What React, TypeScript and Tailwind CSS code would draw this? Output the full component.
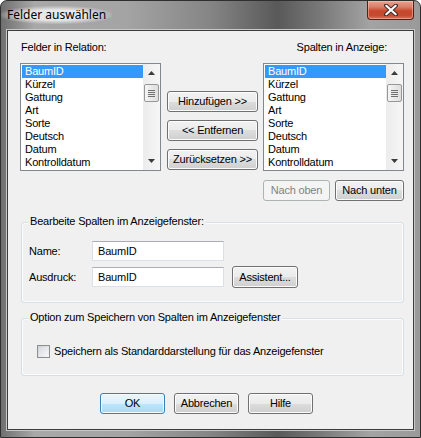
import type { ReactNode } from "react";

const fields = ["BaumID", "Kürzel", "Gattung", "Art", "Sorte", "Deutsch", "Datum", "Kontrolldatum"];

function Arrow({ down = false }: { down?: boolean }) {
  return (
    <svg width="7" height="4" viewBox="0 0 7 4" aria-hidden>
      <path d={down ? "M0 0h7L3.5 4z" : "M3.5 0L7 4H0z"} fill="#3b3b3b" />
    </svg>
  );
}

function Scrollbar() {
  return (
    <div className="flex h-full w-[17px] flex-col bg-gradient-to-r from-[#ececec] to-[#f6f6f6]">
      <div className="flex h-[17px] items-center justify-center pt-px">
        <Arrow />
      </div>
      <div className="mx-px mt-[3px] flex h-[18px] flex-col items-center justify-center gap-px rounded-[2px] border border-[#979797] bg-gradient-to-r from-[#f5f5f5] to-[#dedede]">
        <div className="h-px w-[7px] bg-[#6f6f6f]" />
        <div className="h-px w-[7px] bg-[#6f6f6f]" />
        <div className="h-px w-[7px] bg-[#6f6f6f]" />
        <div className="h-px w-[7px] bg-[#6f6f6f]" />
      </div>
      <div className="flex-1" />
      <div className="flex h-[17px] items-center justify-center pb-px">
        <Arrow down />
      </div>
    </div>
  );
}

function ListBox() {
  return (
    <div className="flex h-[108px] w-[141px] border border-[#828790] bg-white">
      <div className="flex-1 pl-px pt-px">
        {fields.map((f, i) => (
          <div
            key={f}
            className={`h-[13px] pl-[3px] leading-[13px] ${i === 0 ? "bg-[#3399ff] text-white" : "text-black"}`}
          >
            {f}
          </div>
        ))}
      </div>
      <Scrollbar />
    </div>
  );
}

function Button({
  children,
  w,
  h = "h-[21px]",
  disabled = false,
  primary = false,
}: {
  children: ReactNode;
  w: string;
  h?: string;
  disabled?: boolean;
  primary?: boolean;
}) {
  const skin = disabled
    ? "border-[#adb2b5] bg-[#f4f4f4] text-[#838383]"
    : primary
      ? "border-[#3c7fb1] bg-[linear-gradient(#eaf6fd_0%,#d9f0fc_50%,#bee6fd_50%,#a7d9f5_100%)] text-black shadow-[inset_0_0_0_1px_#f4fbfe]"
      : "border-[#707070] bg-[linear-gradient(#f2f2f2_0%,#ebebeb_50%,#dddddd_50%,#cfcfcf_100%)] text-black shadow-[inset_0_0_0_1px_#fcfcfc]";
  return (
    <div className={`flex items-center justify-center rounded-[3px] border ${w} ${h} ${skin}`}>{children}</div>
  );
}

function TextBox({ value }: { value: string }) {
  return (
    <div className="flex h-[20px] w-[132px] items-center border border-[#dbdfe6] border-t-[#abadb3] bg-white pl-[5px]">
      {value}
    </div>
  );
}

function GroupBox({ title, h, children }: { title: string; h: string; children: ReactNode }) {
  return (
    <div className={`relative w-[383px] rounded-[3px] border border-[#d5dfe5] shadow-[inset_0_0_0_1px_#fbfcfd] ${h}`}>
      <span className="absolute -top-[8px] left-[6px] bg-[#f0f0f0] px-[2px] leading-[13px]">{title}</span>
      {children}
    </div>
  );
}

export default function App() {
  return (
    <div className="flex h-[438px] w-[421px] flex-col rounded-t-[7px] border border-[#2f2f2f] bg-[linear-gradient(to_right,#6f6f6f_0%,#a8a8a8_8%,#a4a4a4_30%,#858585_50%,#595959_66%,#787878_76%,#a3a3a3_88%,#9a9a9a_100%)] font-['Liberation_Sans',Arial,sans-serif] text-[11px] tracking-[-0.2px] text-black">
      {/* Titelleiste */}
      <div className="flex h-[28px] items-start justify-between">
        <span className="mt-[5px] rounded-full bg-[radial-gradient(ellipse_at_center,rgba(235,235,235,0.95)_40%,rgba(210,210,210,0)_75%)] px-[6px] py-[1px] font-['Noto_Sans',sans-serif] text-[12px] leading-[16px] tracking-normal text-black">
          Felder auswählen
        </span>
        <div className="mr-[6px] flex h-[19px] w-[47px] items-center justify-center rounded-b-[4px] border border-t-0 border-[#4f2219] bg-[linear-gradient(#e8a493_0%,#d97a63_35%,#c9472c_55%,#c24b31_80%,#d9735b_100%)] shadow-[inset_0_0_0_1px_rgba(255,210,200,0.45)]">
          <svg width="14" height="12" viewBox="0 0 14 12" aria-hidden>
            <path d="M2 1.5L12 10.5M12 1.5L2 10.5" stroke="#3a2a28" strokeWidth="4" strokeLinecap="round" />
            <path d="M2.3 1.8L11.7 10.2M11.7 1.8L2.3 10.2" stroke="#ffffff" strokeWidth="2.2" strokeLinecap="round" />
          </svg>
        </div>
      </div>

      {/* Clientbereich */}
      <div className="mx-[5px] mb-[6px] flex-1 border border-[#c8c8c8] bg-[#3c3c3c] p-px">
        <div className="flex h-full flex-col bg-[#f0f0f0] pl-[12px]">
          <div className="mt-[10px] flex h-[13px] w-[383px] justify-between pl-px leading-[13px]">
            <span>Felder in Relation:</span>
            <span className="mr-[16px]">Spalten in Anzeige:</span>
          </div>

          <div className="mt-[9px] flex items-start">
            <ListBox />
            <div className="ml-[6px] mt-[28px] flex flex-col gap-[8px]">
              <Button w="w-[91px]">Hinzufügen &gt;&gt;</Button>
              <Button w="w-[91px]">&lt;&lt; Entfernen</Button>
              <Button w="w-[91px]">Zurücksetzen &gt;&gt;</Button>
            </div>
            <div className="ml-[5px]">
              <ListBox />
            </div>
          </div>

          <div className="mt-[9px] flex w-[384px] justify-end gap-[5px]">
            <Button w="w-[67px]" disabled>
              Nach oben
            </Button>
            <Button w="w-[69px]">Nach unten</Button>
          </div>

          <div className="ml-px mt-[21px]">
            <GroupBox title="Bearbeite Spalten im Anzeigefenster:" h="h-[81px]">
              <div className="ml-[7px] mt-[18px] flex items-center">
                <span className="w-[63px]">Name:</span>
                <TextBox value="BaumID" />
              </div>
              <div className="ml-[7px] mt-[5px] flex items-center">
                <span className="w-[63px]">Ausdruck:</span>
                <TextBox value="BaumID" />
                <div className="ml-[8px]">
                  <Button w="w-[66px]" h="h-[22px]">
                    Assistent...
                  </Button>
                </div>
              </div>
            </GroupBox>
          </div>

          <div className="ml-px mt-[15px]">
            <GroupBox title="Option zum Speichern von Spalten im Anzeigefenster" h="h-[58px]">
              <div className="ml-[15px] mt-[26px] flex items-center gap-[4px]">
                <div className="flex h-[13px] w-[13px] items-center justify-center border border-[#8e8f8f] bg-[linear-gradient(135deg,#cbcfd5,#f6f6f6)]">
                  <div className="h-[9px] w-[9px] bg-[linear-gradient(135deg,#d7dadf,#f7f7f7)]" />
                </div>
                <span className="leading-[13px]">Speichern als Standarddarstellung für das Anzeigefenster</span>
              </div>
            </GroupBox>
          </div>

          <div className="mt-[17px] flex gap-[9px] pl-[80px]">
            <Button w="w-[65px]" primary>
              OK
            </Button>
            <Button w="w-[65px]">Abbrechen</Button>
            <Button w="w-[65px]">Hilfe</Button>
          </div>
        </div>
      </div>
    </div>
  );
}
